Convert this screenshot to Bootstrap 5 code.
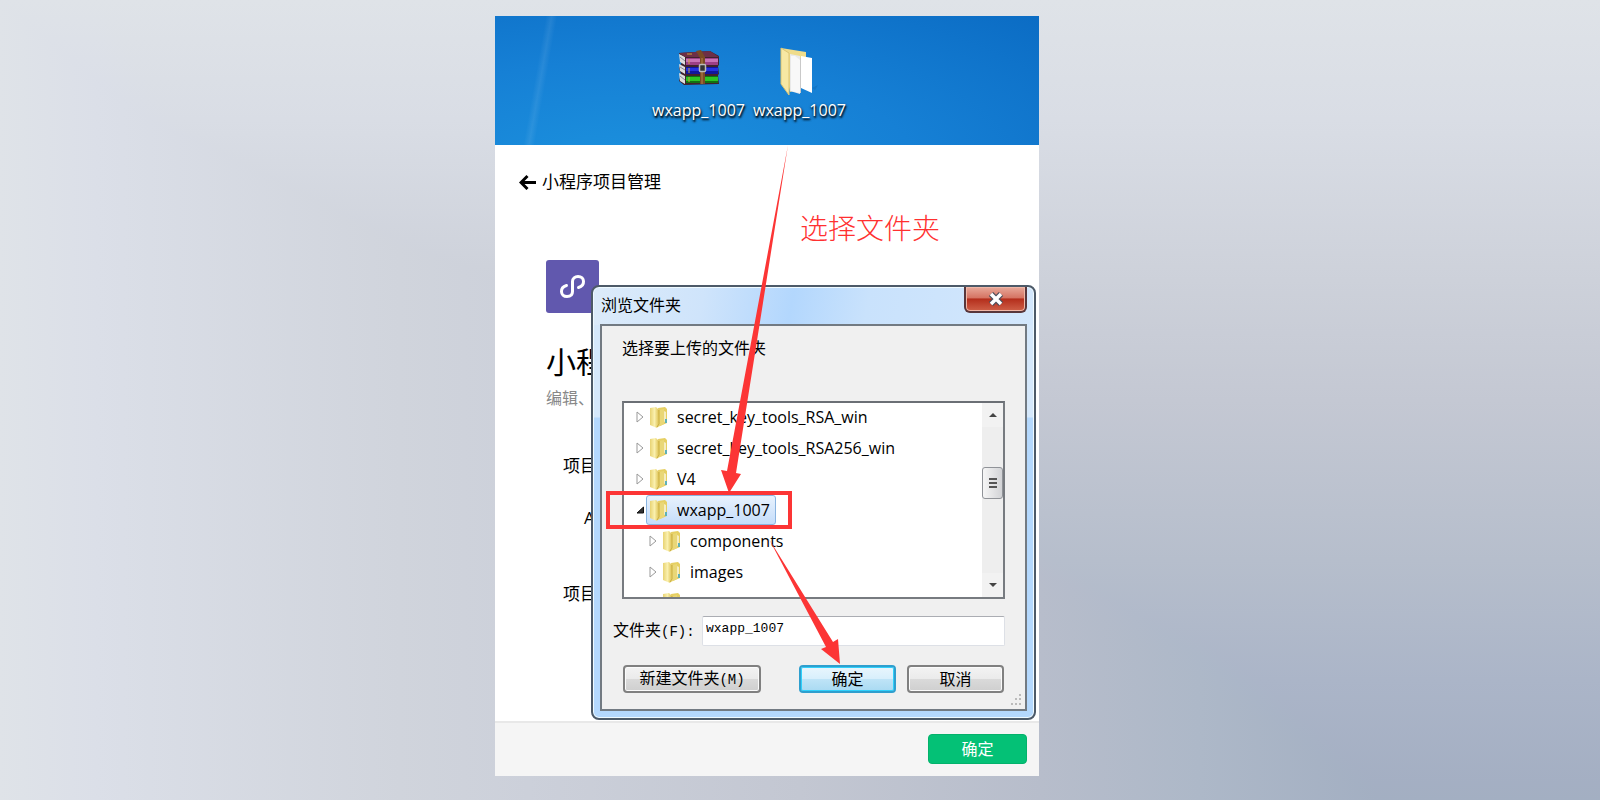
<!DOCTYPE html>
<html lang="zh-CN">
<head>
<meta charset="utf-8">
<meta name="viewport" content="width=device-width, initial-scale=1">
<title>小程序项目管理</title>
<link rel="stylesheet" href="https://cdn.jsdelivr.net/npm/bootstrap@5.3.0/dist/css/bootstrap.min.css">
<style>
body{min-height:100vh;padding:16px 66px 24px 0;font-family:"Open Sans","Noto Sans CJK SC",sans-serif;font-size:16px;line-height:24px;color:#000;
 background:linear-gradient(to right,#dfe3e8 0,#dbdfe8 6%,#d0d4dc 25%,#ccd0da 33%,#c3c7d2 50%,#b7bdcb 65%,#adb8c8 75%,#a3afc2 86%),linear-gradient(to bottom,#dfe3e8 0,#d9dde5 15%,#cdd1da 35%,#c4c8d3 50%,#b6becc 70%,#abb5c8 85%,#a3aec2 100%);background-blend-mode:lighten}
.stage{width:34vw;min-width:544px;background:#fff}
.desktop{height:129px;padding:30px 0 0 153px;background:linear-gradient(100deg,transparent 9%,#ffffff14 10%,transparent 11%),radial-gradient(ellipse at 25% 120%,#1c92de 0,#1680d5 50%,#0b6cc4 100%)}
.desk-item{width:101px;color:#fff;text-decoration:none;text-shadow:1px 2px 2px #000,0 1px 3px #000a}
.desk-item svg{height:50px;margin-bottom:2px}
.page-body{height:576px;padding:25px 24px 0}
.back{color:#000;text-decoration:none;font-size:17px;gap:5px}
.intro{padding:64px 0 0 27px}
.logo{width:53px;height:53px;border-radius:3px;background:#6158ae}
.intro h1{font-size:30px;line-height:40px;margin:29px 0 4px;font-weight:400}
.intro p{color:#888;margin:0;line-height:24px}
.fields{font-size:17px;padding:44px 0 0 44px}
.fields .appid{padding:28px 0 52px 21px}
.note{position:absolute;right:99px;top:196px;font-size:28px;line-height:32px;font-weight:300;color:#ff3030}
.footer-bar{height:55px;background:#f5f5f5;border-top:2px solid #e8e8e8;padding:11px 12px 0}
.btn-go{width:99px;height:30px;padding:0;background:#04c176;border:1px solid #03b26b;border-radius:4px;color:#fff;font-size:16px;line-height:28px}
.win{position:absolute;top:269px;left:96px;right:3px;border:2px solid #4d5a68;border-radius:8px;padding:0 7px 7px 7px;box-shadow:inset 0 0 0 1px #effaff;
 background:linear-gradient(100deg,#dcebfa 0,#cfe4fb 25%,#b3d7fd 45%,#c9e2fc 62%,#d3e7fc 100%) top/100% 38px no-repeat,linear-gradient(#d5e8fb 0 130px,#b4d8fd 131px)}
.win-title{height:37px}
.win-title h2{font-size:16px;line-height:24px;margin:6px 0 0 1px;font-weight:400}
.win-close{width:63px;height:26px;padding:0;border:2px solid #58363b;border-top:0;border-radius:0 0 6px 6px;background:linear-gradient(#e8a99a 0,#d57463 45%,#b42e1c 50%,#cf6048 100%);box-shadow:inset 0 0 0 1px #f0b8a8}
.win-panel{background:#f0f0f0;border:2px solid #727a82;padding:10px 20px 16px}
.tree{height:198px;margin-top:41px;border:2px solid #777b80;border-top-color:#6b6f75;background:#fff;overflow:hidden}
.tree ul{list-style:none;margin:0;padding:0}
.tree ul ul{padding-left:13px}
.tree .tree-list{padding-left:11px;margin-top:-2px}
.tree-row{height:31px}
.tree-row .tw{width:10px;height:12px;margin-right:1px}
.tree-label{height:30px;border:1px solid transparent;border-radius:3px;padding:0 5px 0 2px}
.tree-label svg{width:19px;height:22px;margin-right:9px}
.tree-label.picked{border-color:#8ab4e0;background:linear-gradient(#e8f2fd,#c5ddfa)}
.sbar{width:21px;background:#eee}
.sbar button{display:block;width:100%;height:24px;border:0;padding:0;background:#f2f2f2;line-height:0}
.thumb{height:32px;border:1px solid #909398;border-radius:3px;background:linear-gradient(to right,#f6f6f6,#d2d3d6);margin-top:40px}
.song{font-family:"Liberation Mono","Noto Sans CJK SC",monospace}
.name-row{margin:17px 0 0 -9px}
.name-row label{width:89px;white-space:nowrap}
.name-row label .song,.btn-w .song{font-size:14px}
.name-row input{height:30px;border:1px solid #dde0e6;border-top-color:#abadb3;border-radius:2px;padding:0 3px 5px;font-size:13px;background:#fff}
.acts{margin-top:19px;padding:0 1px;gap:11px}
.btn-w{height:28px;padding:0;border:2px solid #808080;border-radius:4px;background:linear-gradient(#f3f3f3 0,#ebebeb 48%,#dadada 50%,#cfcfcf 100%);box-shadow:inset 0 0 0 1px #fbfbfb;font-size:16px;line-height:22px;color:#000}
.btn-w.ok{border-color:#2f9fce;background:linear-gradient(#e9f6fd 0,#d8effc 48%,#bfe4f7 50%,#a9daf2 100%);box-shadow:inset 0 0 0 1px #2fd0fb}
.w-new{width:138px}
.w-std{width:97px}
.grip{position:absolute;right:12px;bottom:12px}
.marks{position:absolute;right:0;top:0;pointer-events:none}
</style>
</head>
<body class="d-flex justify-content-center align-items-start">
<svg width="0" height="0" class="position-absolute" aria-hidden="true">
 <defs>
  <linearGradient id="fy" x1="0" x2="1"><stop offset="0" stop-color="#e8d373"/><stop offset=".5" stop-color="#faf0ae"/><stop offset="1" stop-color="#dcc04f"/></linearGradient>
  <symbol id="folder" viewBox="0 0 19 22"><path d="M9 2l7-1 2 2v14l-7 3z" fill="#e6cf62"/><path d="M15 5l2 1v9l-2 1z" fill="#f6edc0"/><path d="M16 13h2v4h-2z" fill="#5fb0b8"/><path d="M1 2l6-1 3 3v15l-2 3-7-3z" fill="url(#fy)"/><path d="M10 4l5-1v15l-6 3z" fill="#e9d777"/><path d="M10 4v14l-2 3" fill="none" stroke="#c9ac3e"/></symbol>
  <symbol id="closed" viewBox="0 0 10 12"><path d="M2 1l6 5-6 5z" fill="#fff" stroke="#999"/></symbol>
  <symbol id="open" viewBox="0 0 10 12"><path d="M8.500 3v6H2z" fill="#333" stroke="#111"/></symbol>
 </defs>
</svg>
<main class="stage position-relative">
 <section class="desktop d-flex">
  <a href="#" class="desk-item d-flex flex-column align-items-center">
   <svg width="44" height="50" viewBox="0 0 44 50">
    <path d="M2 7l31-2 9 5v9l-1 1 1 8-1 1 1 9-35 1-5-4 2-7-2-6 3-6z" fill="#40222d"/>
    <path d="M2 8l6 3v8l-5-3zM2 18l6 3v7l-5-3zM2 27l6 3v8l-5-3z" fill="#ddd"/>
    <path d="M3 11l5 4M3 21l5 3M3 30l5 4" stroke="#889"/>
    <path d="M2 7l31-2 9 6H8z" fill="#6d2f47"/><path d="M9 12h32v7H9z" fill="#9c3f86"/><path d="M9 13h32v3H9z" fill="#c873b6"/>
    <path d="M9 21h32v7H9z" fill="#11169c"/><path d="M9 22h32v3H9z" fill="#2431e0"/>
    <path d="M9 30h32v7H9z" fill="#127012"/><path d="M9 31h32v4H9z" fill="#2cc424"/>
    <path d="M12 13v5M12 22v5M12 31v5M10 8h5" stroke="#c9a53a"/>
    <path d="M19 5l5-1 4 7v27h-5V12z" fill="#7a4a25"/><path d="M25 12v26" stroke="#b98347"/>
    <rect x="22.500" y="18.500" width="6" height="7" rx="1" fill="#333" stroke="#bbb" stroke-width="1.500"/>
   </svg>
   <span>wxapp_1007</span></a>
  <a href="#" class="desk-item d-flex flex-column align-items-center">
   <svg width="42" height="50" viewBox="0 0 42 50">
    <path d="M2 2l25 4v34l-16 6z" fill="#efdc8b"/><path d="M33 42l6-3-3 5z" fill="#0d63ae" opacity=".4"/>
    <path d="M11 8l10 2v38l-10-3z" fill="#e9e9e9"/><path d="M12 10h4l5 4v33l-9-2z" fill="#f8f8f8"/>
    <path d="M22 10l11 2v35l-11-5z" fill="#fff"/><path d="M21.500 12v35" stroke="#c9c9c9"/>
    <path d="M2 2l8 5v42L2 38z" fill="#f7e8a3" stroke="#dcc574"/>
   </svg>
   <span>wxapp_1007</span></a>
 </section>

 <section class="page-body">
  <a href="#" class="back d-inline-flex align-items-center">
   <svg width="18" height="16" viewBox="0 0 18 16"><path d="M17 8.500H3M8.500 2L2 8.500 8.500 15" fill="none" stroke="#000" stroke-width="3"/></svg>
   <span>小程序项目管理</span></a>
  <div class="intro">
   <div class="logo d-flex align-items-center justify-content-center">
    <svg width="27" height="27" viewBox="0 0 27 27"><path d="M7.500 12.500c-7 2-6.500 11 .5 11 3.500 0 5.500-2 5.500-5V8.500c0-3 2.500-5 5.500-5 7 0 7.500 9 .5 11" fill="none" stroke="#fff" stroke-width="3" stroke-linecap="round"/></svg>
   </div>
   <h1>小程序</h1>
   <p>编辑、调试</p>
  </div>
  <div class="fields text-nowrap">
   <div>项目</div>
   <div class="appid">A</div>
   <div>项目</div>
  </div>
 </section>
 <div class="note">选择文件夹</div>

 <footer class="footer-bar d-flex justify-content-end align-items-start">
  <button type="button" class="btn btn-go">确定</button>
 </footer>

 <section class="win" role="dialog" aria-labelledby="dlg-title">
  <header class="win-title d-flex justify-content-between align-items-start">
   <h2 id="dlg-title">浏览文件夹</h2>
   <button type="button" class="win-close d-flex align-items-center justify-content-center" aria-label="关闭">
    <svg width="18" height="16" viewBox="0 0 18 16"><path d="M4 3l10 10M14 3L4 13" stroke="#4a4f5c" stroke-width="6"/><path d="M4 3l10 10M14 3L4 13" stroke="#fff" stroke-width="3.500"/></svg></button>
  </header>
  <div class="win-panel">
   <div>选择要上传的文件夹</div>
   <div class="tree d-flex">
    <ul class="tree-list flex-grow-1">
     <li class="tree-row d-flex align-items-center"><svg class="tw"><use href="#closed"/></svg><span class="tree-label d-flex align-items-center"><svg><use href="#folder"/></svg>secret_key_tools_RSA_win</span></li>
     <li class="tree-row d-flex align-items-center"><svg class="tw"><use href="#closed"/></svg><span class="tree-label d-flex align-items-center"><svg><use href="#folder"/></svg>secret_key_tools_RSA256_win</span></li>
     <li class="tree-row d-flex align-items-center"><svg class="tw"><use href="#closed"/></svg><span class="tree-label d-flex align-items-center"><svg><use href="#folder"/></svg>V4</span></li>
     <li><div class="tree-row d-flex align-items-center"><svg class="tw"><use href="#open"/></svg><span class="tree-label picked d-flex align-items-center"><svg><use href="#folder"/></svg>wxapp_1007</span></div>
      <ul>
       <li class="tree-row d-flex align-items-center"><svg class="tw"><use href="#closed"/></svg><span class="tree-label d-flex align-items-center"><svg><use href="#folder"/></svg>components</span></li>
       <li class="tree-row d-flex align-items-center"><svg class="tw"><use href="#closed"/></svg><span class="tree-label d-flex align-items-center"><svg><use href="#folder"/></svg>images</span></li>
       <li class="tree-row d-flex align-items-center"><svg class="tw"><use href="#closed"/></svg><span class="tree-label d-flex align-items-center"><svg><use href="#folder"/></svg></span></li>
      </ul></li>
    </ul>
    <div class="sbar d-flex flex-column">
     <button type="button" aria-label="向上"><svg width="10" height="6" viewBox="0 0 10 6"><path d="M1 5l4-4 4 4z" fill="#444"/></svg></button>
     <div class="thumb d-flex align-items-center justify-content-center"><svg width="10" height="12" viewBox="0 0 10 12"><path d="M1 2h8M1 6h8M1 10h8" stroke="#555" stroke-width="2"/></svg></div>
     <button type="button" class="mt-auto" aria-label="向下"><svg width="10" height="6" viewBox="0 0 10 6"><path d="M1 1l4 4 4-4z" fill="#444"/></svg></button>
    </div>
   </div>
   <div class="name-row d-flex align-items-center">
    <label for="fname">文件夹<span class="song">(F):</span></label>
    <input id="fname" class="song flex-grow-1" type="text" value="wxapp_1007">
   </div>
   <div class="acts d-flex">
    <button type="button" class="btn-w w-new me-auto">新建文件夹<span class="song">(M)</span></button>
    <button type="button" class="btn-w w-std ok">确定</button>
    <button type="button" class="btn-w w-std">取消</button>
   </div>
  </div>
  <svg class="grip" width="12" height="12" viewBox="0 0 12 12"><path d="M9 0h2v2H9zM5 4h2v2H5zM9 4h2v2H9zM1 9h2v2H1zM5 9h2v2H5zM9 9h2v2H9z" fill="#bbb"/></svg>
 </section>

 <svg class="marks" width="544" height="760" viewBox="495 16 544 760" aria-hidden="true">
  <rect x="608" y="493" width="182" height="34" fill="none" stroke="#fc3535" stroke-width="4"/>
  <path d="M788 145L736 473l5 1-12 19-8-23 6 1zM769 539l64 103 5-3 2 25-19-15 5-2z" fill="#fc3535"/>
 </svg>
</main>
<script src="https://cdn.jsdelivr.net/npm/bootstrap@5.3.0/dist/js/bootstrap.bundle.min.js"></script>
</body>
</html>
